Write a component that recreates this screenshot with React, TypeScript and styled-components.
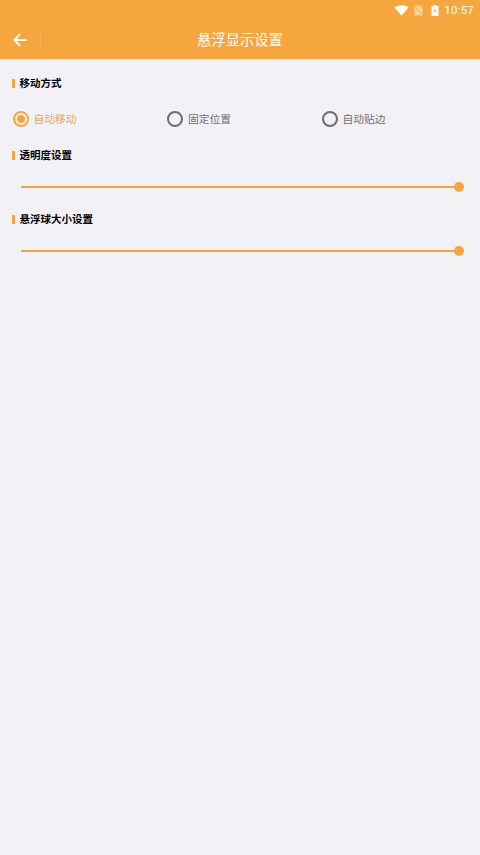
import React from "react";
import styled, { createGlobalStyle } from "styled-components";

const Global = createGlobalStyle`
  html, body { margin: 0; padding: 0; background: #f1f1f6; }
  body { font-family: "Noto Sans CJK SC", "Noto Sans", sans-serif; }
`;
const Page = styled.div`
  width: 480px; height: 855px; background: #f1f1f6; overflow: hidden;
`;
const Top = styled.div`background: #f5a63e;`;
const StatusBar = styled.div`
  height: 20px; display: flex; align-items: center; justify-content: flex-end;
  padding-right: 6px; color: #fff; font: 11.5px Roboto, sans-serif; letter-spacing: 0.2px;
`;
const StatusIcon = styled.svg<{ $mr: number }>`display: block; margin-right: ${p => p.$mr}px;`;
const Header = styled.div`
  height: 39px; display: grid; grid-template-columns: 41px 1fr 41px; align-items: center;
`;
const Back = styled.div`
  height: 16px; display: flex; align-items: center; justify-content: center;
  border-right: 1px solid #f8b15a; padding-right: 1px;
`;
const Title = styled.div`
  color: #fff; font-size: 14.3px; line-height: 20px; text-align: center;
  margin-top: -2px;
`;
const Section = styled.section<{ $h: number; $top?: number }>`
  box-sizing: border-box; height: ${p => p.$h}px; padding: ${p => p.$top ?? 0}px 0 0 12px;
`;
const Heading = styled.div`
  display: flex; align-items: center; gap: 4.5px; height: 16px;
  font-size: 10.5px; font-weight: 700; color: #000;
  &::before { content: ""; width: 3px; height: 9px; background: #f5a63e; border-radius: 0.5px; }
`;
const HeadingText = styled.span`position: relative; top: -0.5px;`;
const Radios = styled.div`
  display: grid; grid-template-columns: 154px 155px 155px; margin: 19px 0 0 1px;
`;
const Radio = styled.div<{ $on?: boolean }>`
  display: flex; align-items: center; gap: 5px; height: 18px;
  font-size: 10.75px; line-height: 16px; color: ${p => (p.$on ? "#f5a63e" : "#6d6d75")};
`;
const RadioLabel = styled.span<{ $nudge?: number }>`
  position: relative; top: -0.5px; left: ${p => p.$nudge ?? -0.5}px;
`;
const Ring = styled.span<{ $on?: boolean }>`
  box-sizing: border-box; width: 16px; height: 16px; border-radius: 50%;
  border: 2px solid ${p => (p.$on ? "#f5a63e" : "#6d6d75")};
  display: flex; align-items: center; justify-content: center;
  &::after {
    content: ""; width: 8px; height: 8px; border-radius: 50%;
    background: ${p => (p.$on ? "#f5a63e" : "transparent")};
  }
`;
const Track = styled.div`
  position: relative; height: 2px; width: 438px; margin: 23px 0 0 9px; background: #f5a63e;
`;
const Thumb = styled.span`
  position: absolute; right: -5px; top: -4px; width: 10px; height: 10px;
  border-radius: 50%; background: #f5a63e;
`;

export default function App() {
  return (
    <Page>
      <Global />
      <Top>
        <StatusBar>
          <StatusIcon $mr={4} width="15" height="11" viewBox="0 0 15 11">
            <path d="M0.5 2.6C2.5 1 4.9 0.2 7.5 0.2S12.5 1 14.5 2.6L7.5 10.8Z" fill="#fff" />
          </StatusIcon>
          <StatusIcon $mr={7} width="11" height="11" viewBox="0 0 11 11">
            <path d="M1.5 0.5H7L9.5 3V10.5H1.5Z" fill="#fbd3a0" />
            <path d="M1 0.5L10 10.5" stroke="#f5a63e" strokeWidth="1" />
          </StatusIcon>
          <StatusIcon $mr={5} width="8" height="11" viewBox="0 0 8 11">
            <path d="M2.5 0H5.5V1H7.5V11H0.5V1H2.5Z" fill="#fff" />
            <path d="M4.6 2.4L2.6 6H3.8L3.4 8.8L5.5 5H4.2Z" fill="#f5a63e" />
          </StatusIcon>
          <span>10:57</span>
        </StatusBar>
        <Header>
          <Back>
            <svg width="14" height="14" viewBox="0 0 14 14" fill="none" stroke="#fff" strokeWidth="1.8">
              <path d="M13.5 7H1.5M7 1.2L1.3 7L7 12.8" />
            </svg>
          </Back>
          <Title>悬浮显示设置</Title>
          <span />
        </Header>
      </Top>
      <Section $h={87} $top={16}>
        <Heading><HeadingText>移动方式</HeadingText></Heading>
        <Radios>
          <Radio $on><Ring $on /><RadioLabel>自动移动</RadioLabel></Radio>
          <Radio><Ring /><RadioLabel $nudge={0}>固定位置</RadioLabel></Radio>
          <Radio><Ring /><RadioLabel>自动贴边</RadioLabel></Radio>
        </Radios>
      </Section>
      <Section $h={64} $top={1}>
        <Heading><HeadingText>透明度设置</HeadingText></Heading>
        <Track><Thumb /></Track>
      </Section>
      <Section $h={64} $top={1}>
        <Heading><HeadingText>悬浮球大小设置</HeadingText></Heading>
        <Track><Thumb /></Track>
      </Section>
    </Page>
  );
}
